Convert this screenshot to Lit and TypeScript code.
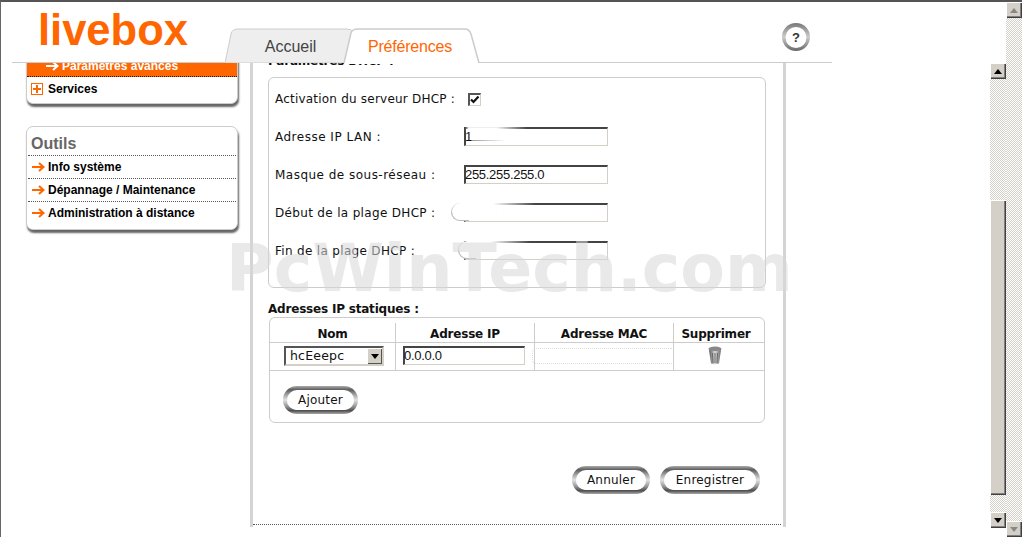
import { LitElement, html, css } from "lit";
import { customElement } from "lit/decorators.js";

const arrow = (cls: string) => html`<svg class=${cls} width="13" height="10" viewBox="0 0 13 10"><path d="M0 5H11M7 1l4.500 4-4.500 4" fill="none" stroke="currentColor" stroke-width="2"/></svg>`;

const tri = (dir: "up" | "down", color: string) => html`<svg width="8" height="5" viewBox="0 0 8 5"><path d=${dir === "up" ? "M4 0L8 5H0Z" : "M0 0H8L4 5Z"} fill=${color}/></svg>`;

@customElement("app-root")
export class AppRoot extends LitElement {
  static styles = css`
    :host { display: block; width: 1022px; height: 537px; position: relative; overflow: hidden; background: #fff; font-family: "DejaVu Sans", Verdana, sans-serif; font-size: 12px; color: #111; }
    .shell { display: flex; width: 1022px; height: 537px; box-sizing: border-box; border-top: 2px solid #555; border-left: 1px solid #666; }
    .page { width: 1005px; display: flex; flex-direction: column; }
    .header { height: 60px; width: 820px; margin-left: 11px; border-bottom: 1px solid #ccc; display: flex; flex: none; position: relative; z-index: 2; background: #fff; box-sizing: content-box; }
    .logo { width: 213px; padding: 3px 0 0 26px; box-sizing: border-box; font: bold 43.500px/50px "Liberation Sans", Arial, sans-serif; color: #ff6600; }
    .tabs { display: flex; margin-top: 26px; height: 35px; margin-right: 304px; }
    .tab { position: relative; height: 35px; font: 16px/37px "Liberation Sans", Arial, sans-serif; text-align: center; }
    .tab svg { position: absolute; left: 0; top: 0; }
    .tab span { position: relative; }
    .tab.a { width: 118px; color: #444; padding-left: 13px; box-sizing: border-box; }
    .tab.b { width: 134px; color: #ff6600; letter-spacing: -0.200px; }
    .help { margin-top: 20px; width: 30px; height: 30px; }
    .help-text { font: bold 13px "Liberation Sans", Arial, sans-serif; fill: #333; }

    .body { flex: 1; display: flex; overflow: hidden; min-height: 0; }
    .side { width: 249px; flex: none; padding-left: 25px; box-sizing: border-box; }
    .card { width: 212px; box-sizing: border-box; border: 1px solid #ccc; border-radius: 7px; box-shadow: 1px 3px 2px #666; background: #fff; font: bold 12px "Liberation Sans", Arial, sans-serif; color: #000; }
    .card.first { margin-top: -16px; height: 57px; }
    .orange { height: 29px; background: #ff6600; border-bottom: 1px dotted #222; color: #fff; display: flex; align-items: flex-end; padding: 0 0 3px 19px; box-sizing: border-box; gap: 3px; border-radius: 6px 6px 0 0; }
    .orange svg { margin-bottom: 2px; }
    .item { display: flex; align-items: center; gap: 3px; height: 23px; padding-left: 4px; }
    .item.services { height: 24px; gap: 5px; }
    .plus { width: 10px; height: 10px; border: 1px solid #ff6600; position: relative; flex: none; background: linear-gradient(#ff6600,#ff6600) center/8px 2px no-repeat, linear-gradient(#ff6600,#ff6600) center/2px 8px no-repeat; }
    .org { color: #ff6600; flex: none; }
    .card.tools { margin-top: 22px; height: 104px; }
    .tools-title { font: bold 16px/28px "Liberation Sans", Arial, sans-serif; color: #666; height: 28px; padding: 3px 0 0 4px; box-sizing: border-box; }
    .tools .item { border-top: 1px dotted #555; margin: 0 1px; box-sizing: border-box; }

    .main { width: 536px; height: 464px; flex: none; box-sizing: border-box; border-left: 3px solid #d4d4d4; border-right: 3px solid #d4d4d4; padding: 0 15px; position: relative; display: flex; flex-direction: column; }
    .main::after { content: ""; position: absolute; left: 0; right: 2px; bottom: 2px; border-bottom: 1px dotted #555; }
    h2 { margin: 0; font: bold 12px/14px "DejaVu Sans", Verdana, sans-serif; color: #111; letter-spacing: -0.200px; }
    h2.clip { margin-top: -9px; }
    .box { border: 1px solid #ccc; border-radius: 6px; }
    .dhcp { width: 498px; box-sizing: border-box; height: 211px; margin-top: 9px; padding: 2px 0 0 6px; }
    .row { display: grid; grid-template-columns: 189px 144px; height: 38px; align-items: center; }
    .l1 { letter-spacing: 0.210px; }
    .l2 { letter-spacing: 0.500px; }
    .l3 { letter-spacing: 0.480px; }
    .l4 { letter-spacing: 0.330px; }
    .l5 { letter-spacing: 0.320px; }
    .field { position: relative; height: 19px; box-sizing: border-box; border: 1px solid #d4d0c8; border-top: 2px solid #444; border-left: 2px solid #444; font: 13px/15px "Liberation Sans", Arial, sans-serif; letter-spacing: -0.300px; text-indent: -1px; background: #fff; }
    .row .field { margin-top: -2px; }
    .check { width: 13px; height: 13px; box-sizing: border-box; margin-left: 4px; border: 1px solid #d4d0c8; border-top: 2px solid #555; border-left: 2px solid #555; display: block; }
    .check svg { display: block; }
    .smudge { position: absolute; }
    .s1 { left: 1px; top: -3px; width: 60px; height: 5px; background: linear-gradient(90deg, #fff 50%, transparent); filter: blur(0.800px); }
    .s1b { left: 6px; top: 11px; width: 34px; height: 1px; background: linear-gradient(90deg, #999, transparent); }
    .s2, .s3 { top: -2px; height: 18px; box-sizing: border-box; border-left: 1px solid #ccc; border-radius: 9px 0 0 9px; filter: blur(0.400px); }
    .s2 { left: -15px; width: 84px; background: linear-gradient(90deg, #fff 50%, transparent); }
    .s3 { left: -8px; width: 72px; background: linear-gradient(90deg, #fff 45%, transparent); }
    .s2::after, .s3::after { content: ""; position: absolute; left: -1px; bottom: 0; width: 18px; height: 9px; box-sizing: border-box; border-left: 1px solid #bbb; border-bottom: 1px solid #bbb; border-radius: 0 0 0 9px; }
    .static { margin-top: 14px; }
    .table { margin: 1px 0 0 1px; width: 496px; height: 106px; box-sizing: border-box; padding-top: 5px; display: flex; flex-direction: column; }
    .cols { display: grid; grid-template-columns: 126px 139px 139px 1fr; }
    .cols > div { border-right: 1px solid #ccc; text-align: center; position: relative; }
    .cols > div:last-child { border-right: 0; }
    .head > div { font: bold 12px/22px "DejaVu Sans", Verdana, sans-serif; height: 19px; letter-spacing: -0.200px; }
    .head > div:last-child { padding-right: 6px; }
    .head { border-bottom: 1px solid #ccc; height: 19px; }
    .data { height: 27px; border-bottom: 1px solid #ccc; }
    .data > div { height: 27px; }
    .select { position: absolute; left: 14px; top: 3px; width: 100px; height: 20px; box-sizing: border-box; border: 2px solid #555; border-right-color: #d4d0c8; border-bottom-color: #d4d0c8; font: 12.500px/16px "DejaVu Sans", Verdana, sans-serif; letter-spacing: 0.200px; text-align: left; padding-left: 4px; }
    .sel-btn { position: absolute; right: 0; top: 0; width: 15px; height: 16px; background: #d4d0c8; box-shadow: inset 1px 1px #fff, inset -1px -1px #555; display: flex; align-items: center; justify-content: center; }
    .ipf { position: absolute; left: 7px; top: 3px; width: 122px; height: 19px; text-align: left; }
    .mac { position: absolute; left: -3px; top: 5px; width: 140px; height: 16px; box-sizing: border-box; border: 1px dotted #ddd; border-right: 0; border-radius: 4px 0 0 4px; }
    .trash { position: absolute; left: 34px; top: 3px; }
    button { font: 12px/18px "DejaVu Sans", Verdana, sans-serif; letter-spacing: 0.200px; color: #111; height: 28px; box-sizing: border-box; border: 4px solid transparent; border-radius: 14px; padding: 0; background: linear-gradient(#fff, #fff) padding-box, linear-gradient(180deg, #aaa, #5c5c5c 14%, #a0a0a0 30%, #e2e2e2 50%, #999 72%, #4f4f4f 88%, #aaa) border-box; box-shadow: inset 0 -1px #fff; }
    .add { margin: 15px 0 0 13px; }
    .add button { width: 75px; }
    .actions { display: flex; justify-content: flex-end; gap: 10px; margin: 43px 8px 0 0; }
    .actions .c { width: 78px; }
    .actions .s { width: 100px; }

    .inner { width: 16px; margin-left: 204px; flex: none; height: 465px; display: flex; flex-direction: column; background: repeating-conic-gradient(#d4d0c8 0 25%, #fff 0 50%) 0 0/2px 2px; }
    .outer { width: 16px; flex: none; display: flex; flex-direction: column; justify-content: space-between; background: repeating-conic-gradient(#d4d0c8 0 25%, #fff 0 50%) 0 0/2px 2px; height: 535px; }
    .sb { width: 16px; height: 16px; flex: none; box-sizing: border-box; background: #d4d0c8; box-shadow: inset 1px 1px #fff, inset -1px -1px #404040, inset -2px -2px #808080; display: flex; align-items: center; justify-content: center; }
    .thumb { width: 16px; height: 295px; margin: auto 0 17px; background: #d4d0c8; box-shadow: inset 1px 1px #fff, inset -1px -1px #404040, inset -2px -2px #808080; flex: none; }
    .mark { position: absolute; left: 226px; top: 231px; font: bold 65px/76px "DejaVu Sans", Verdana, sans-serif; color: rgba(215, 215, 215, 0.55); pointer-events: none; white-space: nowrap; }
  `;

  private help() {
    return html`<svg class="help" viewBox="0 0 30 30"><defs><linearGradient id="ring" x1="0" y1="0" x2="0" y2="1"><stop offset="0" stop-color="#777"/><stop offset=".5" stop-color="#ccc"/><stop offset="1" stop-color="#666"/></linearGradient></defs><circle cx="15" cy="15" r="14" fill="url(#ring)"/><circle cx="15" cy="15.500" r="10.500" fill="#fff"/><text x="15" y="20" text-anchor="middle" class="help-text">?</text></svg>`;
  }

  render() {
    return html`
      <div class="shell">
        <div class="page">
          <div class="header">
            <div class="logo">livebox</div>
            <div class="tabs">
              <div class="tab a"><svg width="128" height="35" viewBox="0 0 128 35"><path d="M0 35L6 6Q7 1 13 1H122Q127 1 128 4V35Z" fill="#eee" stroke="#ccc"/></svg><span>Accueil</span></div>
              <div class="tab b"><svg width="137" height="36" viewBox="0 0 137 36"><path d="M1 36L8 5Q9 1 15 1H122Q126 1 128 6L136 36Z" fill="#fff"/><path d="M1 35L8 5Q9 1 15 1H122Q126 1 128 6L136 35" fill="none" stroke="#ccc" stroke-width="1.500"/></svg><span>Préférences</span></div>
            </div>
            ${this.help()}
          </div>
          <div class="body">
            <div class="side">
              <div class="card first">
                <div class="orange">${arrow("")}<span>Paramètres avancés</span></div>
                <div class="item services"><span class="plus"></span>Services</div>
              </div>
              <div class="card tools">
                <div class="tools-title">Outils</div>
                <div class="item">${arrow("org")}Info système</div>
                <div class="item">${arrow("org")}Dépannage / Maintenance</div>
                <div class="item">${arrow("org")}Administration à distance</div>
              </div>
            </div>
            <div class="main">
              <h2 class="clip">Paramètres DHCP :</h2>
              <div class="box dhcp">
                <div class="row"><span class="l1">Activation du serveur DHCP :</span><span class="check"><svg width="10" height="10" viewBox="0 0 10 10"><path d="M1 4.500l2.500 2.500L8.500 1.500" fill="none" stroke="#111" stroke-width="2.200"/></svg></span></div>
                <div class="row"><span class="l2">Adresse IP LAN :</span><div class="field">1<i class="smudge s1"></i><i class="smudge s1b"></i></div></div>
                <div class="row"><span class="l3">Masque de sous-réseau :</span><div class="field">255.255.255.0</div></div>
                <div class="row"><span class="l4">Début de la plage DHCP :</span><div class="field"><i class="smudge s2"></i></div></div>
                <div class="row"><span class="l5">Fin de la plage DHCP :</span><div class="field"><i class="smudge s3"></i></div></div>
              </div>
              <h2 class="static">Adresses IP statiques :</h2>
              <div class="box table">
                <div class="cols head"><div>Nom</div><div>Adresse IP</div><div>Adresse MAC</div><div>Supprimer</div></div>
                <div class="cols data">
                  <div><div class="select">hcEeepc<span class="sel-btn">${tri("down", "#000")}</span></div></div>
                  <div><div class="field ipf">0.0.0.0</div></div>
                  <div><i class="mac"></i></div>
                  <div>
                    <svg class="trash" width="14" height="19" viewBox="0 0 14 19"><defs><linearGradient id="tg" x1="0" x2="1" y1="0" y2="0"><stop offset="0" stop-color="#555"/><stop offset=".5" stop-color="#ddd"/><stop offset="1" stop-color="#666"/></linearGradient></defs><ellipse cx="7" cy="3" rx="6.500" ry="2.500" fill="#888"/><path d="M1 4L3 17.500Q7 19 11 17.500L13 4Q7 6 1 4Z" fill="url(#tg)"/><path d="M4.500 7l.5 10M7 7v10M9.500 7l-.5 10" stroke="#666" fill="none"/></svg>
                  </div>
                </div>
                <div class="add"><button>Ajouter</button></div>
              </div>
              <div class="actions"><button class="c">Annuler</button><button class="s">Enregistrer</button></div>
            </div>
            <div class="inner">
              <div class="sb">${tri("up", "#000")}</div>
              <div class="thumb"></div>
              <div class="sb">${tri("down", "#000")}</div>
            </div>
          </div>
        </div>
        <div class="outer">
          <div class="sb">${tri("up", "#888")}</div>
          <div class="sb">${tri("down", "#888")}</div>
        </div>
      </div>
      <div class="mark">PcWinTech.com</div>
    `;
  }
}
